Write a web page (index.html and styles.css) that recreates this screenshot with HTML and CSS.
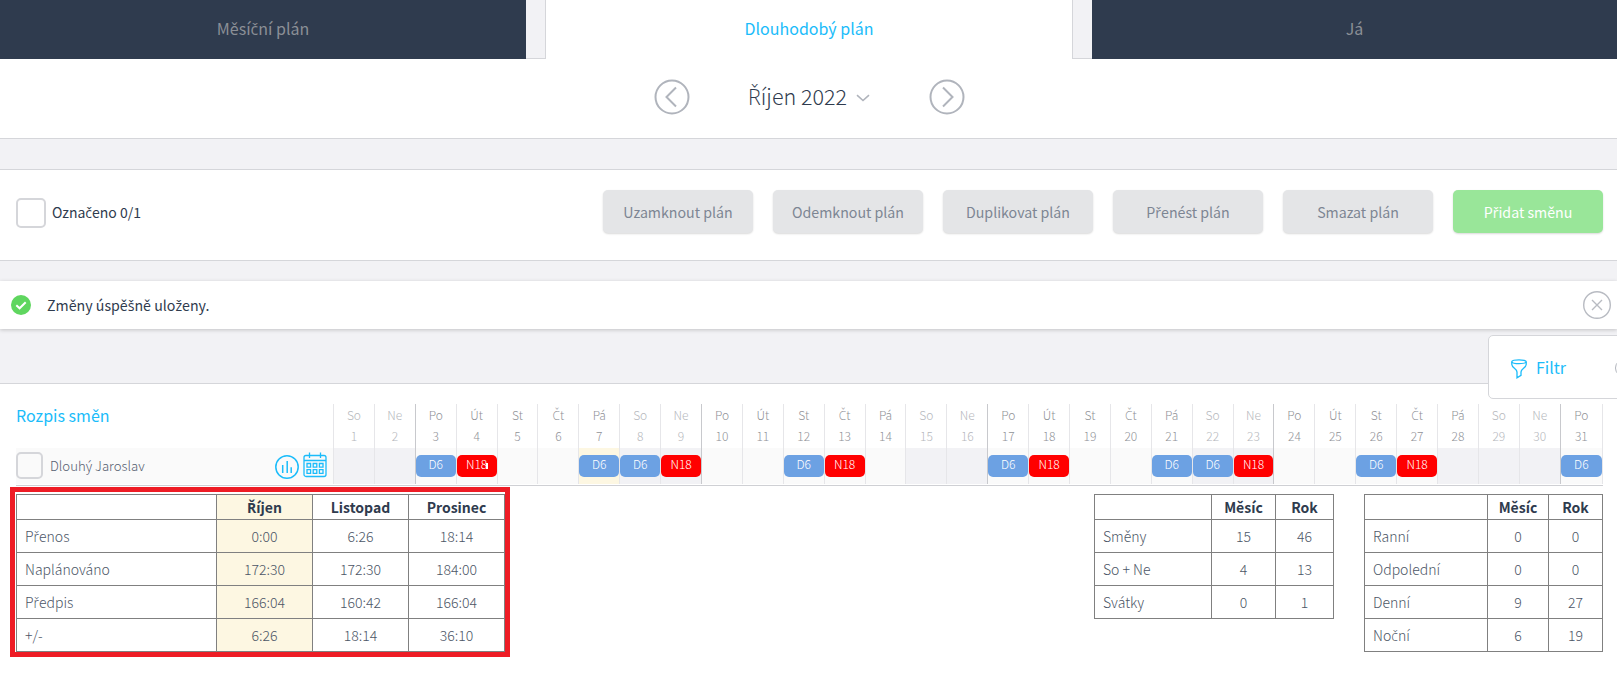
FILE: index.html
```
<!DOCTYPE html>
<html lang="cs">
<head>
  <meta charset="UTF-8">
  <title>Dlouhodobý plán</title>
  <link rel="stylesheet" href="styles.css">
</head>
<body>
  <div class="tabs">
    <a class="tab">Měsíční plán</a>
    <span class="tab-gap left"></span>
    <a class="tab active">Dlouhodobý plán</a>
    <span class="tab-gap right"></span>
    <a class="tab">Já</a>
  </div>

  <div class="month-bar">
    <svg class="arrow" viewBox="0 0 36 36"><circle cx="18" cy="18" r="16.5"/><path d="M22 8.500L12.500 18L22 27.500"/></svg>
    <div class="month"><span>Říjen 2022</span><svg class="chevron" viewBox="0 0 14 8"><path d="M1 1.200L7 6.500L13 1.200"/></svg></div>
    <svg class="arrow" viewBox="0 0 36 36"><circle cx="18" cy="18" r="16.5"/><path d="M14 8.500L23.500 18L14 27.500"/></svg>
  </div>

  <div class="actions">
    <span class="checkbox"></span>
    <span class="marked">Označeno 0/1</span>
    <div class="buttons">
      <button class="btn">Uzamknout plán</button>
      <button class="btn">Odemknout plán</button>
      <button class="btn">Duplikovat plán</button>
      <button class="btn">Přenést plán</button>
      <button class="btn">Smazat plán</button>
      <button class="btn green">Přidat směnu</button>
    </div>
  </div>

  <div class="message">
    <svg class="ok" viewBox="0 0 20 20"><circle cx="10" cy="10" r="10"/><path d="M5.300 10.200L8.600 13.300L14.700 7.200"/></svg>
    <span>Změny úspěšně uloženy.</span>
    <svg class="close" viewBox="0 0 30 30"><circle cx="15" cy="15" r="13.3"/><path d="M10 10L20 20M20 10L10 20"/></svg>
  </div>

  <div class="filter">
    <svg class="funnel" viewBox="0 0 16 20"><ellipse cx="8" cy="2.700" rx="7.200" ry="1.900"/><path d="M.8 2.700V5.500C1 9 6 9.500 6 13V18.800L10 16.300V13C10 9.500 15 9 15.200 5.500V2.700"/></svg>
    <span>Filtr</span>
    <i class="filter-toggle"></i>
  </div>

  <div class="plan">
    <div class="plan-head">
      <div class="plan-title">Rozpis směn</div>
      <div class="days" id="dayNames"></div>
    </div>
    <div class="plan-row">
      <div class="person">
        <span class="checkbox"></span>
        <span class="name">Dlouhý Jaroslav</span>
        <svg class="chart" viewBox="0 0 24 24"><circle cx="12" cy="12" r="11.200"/><path d="M7.700 18V10M12.200 18V6M16.200 18V12.300"/></svg>
        <svg class="calendar" viewBox="0 0 24 26">
          <rect x="1" y="3.500" width="22" height="21" rx="2"/>
          <path d="M1 8.500H23M6.500 .5V6M17.500 .5V6"/>
          <path d="M4 11.500h3.600v3.600H4zM10.200 11.500h3.600v3.600h-3.600zM16.400 11.500H20v3.600h-3.600zM4 17.700h3.600v3.600H4zM10.200 17.700h3.600v3.600h-3.600zM16.400 17.700H20v3.600h-3.600z"/>
        </svg>
      </div>
      <div class="days" id="shifts"></div>
    </div>

    <div class="stats">
      <div class="highlight">
        <table class="hours">
          <tr><th></th><th class="current">Říjen</th><th>Listopad</th><th>Prosinec</th></tr>
          <tr><td>Přenos</td><td class="current">0:00</td><td>6:26</td><td>18:14</td></tr>
          <tr><td>Naplánováno</td><td class="current">172:30</td><td>172:30</td><td>184:00</td></tr>
          <tr><td>Předpis</td><td class="current">166:04</td><td>160:42</td><td>166:04</td></tr>
          <tr><td>+/-</td><td class="current">6:26</td><td>18:14</td><td>36:10</td></tr>
        </table>
      </div>
      <table class="counts">
        <tr><th></th><th>Měsíc</th><th>Rok</th></tr>
        <tr><td>Směny</td><td>15</td><td>46</td></tr>
        <tr><td>So + Ne</td><td>4</td><td>13</td></tr>
        <tr><td>Svátky</td><td>0</td><td>1</td></tr>
      </table>
      <table class="types">
        <tr><th></th><th>Měsíc</th><th>Rok</th></tr>
        <tr><td>Ranní</td><td>0</td><td>0</td></tr>
        <tr><td>Odpolední</td><td>0</td><td>0</td></tr>
        <tr><td>Denní</td><td>9</td><td>27</td></tr>
        <tr><td>Noční</td><td>6</td><td>19</td></tr>
      </table>
    </div>
  </div>

  <script>
    const names = ['So','Ne','Po','Út','St','Čt','Pá'];
    const plan = { 3:'D6', 4:'N18', 7:'D6', 8:'D6', 9:'N18', 12:'D6', 13:'N18', 17:'D6', 18:'N18',
                   21:'D6', 22:'D6', 23:'N18', 26:'D6', 27:'N18', 31:'D6' };
    const today = 7, holidays = [28], noted = [4];
    let head = '', row = '';

    for (let d = 1; d <= 31; d++) {
      const wd = (d - 1) % 7;
      let cls = 'day';
      if (wd < 2) cls += ' weekend';
      if (wd === 2) cls += ' monday';
      head += `<div class="${cls}"><span>${names[wd]}</span><span>${d}</span></div>`;
      if (holidays.includes(d)) cls += ' holiday';
      if (d === today) cls += ' today';
      const s = plan[d];
      const note = noted.includes(d) ? ' noted' : '';
      row += `<div class="${cls}">` + (s ? `<b class="shift ${s[0] === 'D' ? 'daily' : 'night'}${note}">${s}</b>` : '') + '</div>';
    }
    document.getElementById('dayNames').innerHTML = head;
    document.getElementById('shifts').innerHTML = row;

    document.querySelectorAll('.tab, .month span, .marked, .btn, .message span, .plan-head span, th, td').forEach(el => {
      el.innerHTML = el.innerHTML.replace(/[čřšžČŘ]/g, c => `<span class="hacek">${c}</span>`);
    });
  </script>
</body>
</html>
```
FILE: styles.css
```
* { box-sizing:border-box; margin:0; padding:0; }
body { font-family:'Noto Sans CJK SC','Noto Sans',sans-serif; font-size:14px; line-height:20px; color:#2f3b4e;
  background:#f2f2f5; height:673px; overflow:hidden; position:relative; }
svg { fill:none; display:block; flex:none; }
.hacek { font-family:'Open Sans','Noto Sans',sans-serif; line-height:0; }

.tabs { display:grid; grid-template-columns:526px 20px 526px 20px 1fr; height:59px; }
.tab { background:#2f3b4e; color:#8b8f96; font-size:16px; line-height:56px; text-align:center; }
.tab.active { background:#fff; color:#1bbcfa; }
.tab-gap { border-bottom:1px solid #d5d6da; }
.tab-gap.left { border-right:1px solid #d5d6da; }
.tab-gap.right { border-left:1px solid #d5d6da; }

.month-bar { height:80px; background:#fff; border-bottom:1px solid #d5d6da; display:flex; justify-content:center; align-items:center; padding:0 0 3px 1px; }
.arrow { width:36px; height:36px; stroke:#b0b4bc; stroke-width:2; }
.month { width:239px; display:flex; justify-content:center; align-items:center; gap:9px; font-size:21.5px; font-weight:300; line-height:30px; padding-bottom:2px; }
.chevron { width:14px; height:8px; stroke:#b0b4bc; stroke-width:1.6; margin-top:4px; }

.actions { margin-top:30px; height:92px; background:#fff; border-top:1px solid #d5d6da; border-bottom:1px solid #d5d6da;
  display:flex; align-items:center; padding:0 14px 8px 16px; }
.checkbox { width:30px; height:30px; border:2px solid #d5d6da; border-radius:5px; flex:none; margin-top:3px; }
.marked { margin-left:6px; margin-top:1px; }
.buttons { margin-left:auto; display:flex; gap:20px; }
.btn { width:150px; height:43px; border:none; border-radius:5px; background:#e4e5e7; color:#7d8593; font:inherit; font-size:14.2px; padding-top:1px;
  box-shadow:0 1px 2px rgba(0,0,0,0.15); }
.btn.green { background:#99e699; color:#fff; }

.message { margin-top:20px; height:48px; background:#fff; display:flex; align-items:center; padding:0 5px 0 11px; font-size:14.2px; box-shadow:0 1px 4px rgba(0,0,0,0.2); }
.ok { width:20px; height:20px; margin-right:16px; }
.ok circle { fill:#5fd65f; }
.ok path { stroke:#fff; stroke-width:2; }
.close { width:30px; height:30px; margin-left:auto; stroke:#b8bbc2; stroke-width:1.4; }

/* panel vysunutý zprava přes okraj stránky */
.filter { position:absolute; top:335px; left:1488px; width:180px; height:64px; background:#fff; border:1px solid #d5d6da; border-radius:5px;
  display:flex; align-items:center; padding-left:22px; font-size:16px; color:#1bbcfa; }
.funnel { width:16px; height:20px; stroke:#1bbcfa; stroke-width:1.3; margin:3px 9px 0 0; }
.filter-toggle { width:18px; height:18px; border:1px solid #b0b4bc; border-radius:50%; position:absolute; left:126px; top:23px; }

.plan { margin-top:54px; background:#fff; border-top:1px solid #d5d6da; height:290px; padding:20px 14px 0 16px; }
.plan-head, .plan-row { display:flex; }
.plan-head { height:44px; }
.plan-title { width:317px; font-size:16px; line-height:23px; color:#1bbcfa; }
.plan-row { height:38px; border-bottom:1px solid #cfd0d4; background:linear-gradient(#fafafa 36px,#fff 36px); }
.person { width:317px; height:36px; display:flex; align-items:center; padding-right:6px; }
.person .checkbox { width:27px; height:27px; margin-top:-1px; }
.name { font-size:13.2px; font-weight:300; margin-left:7px; color:#566070; }
.chart { width:24px; height:24px; margin-left:auto; margin-right:4px; margin-top:2px; stroke:#1bbcfa; stroke-width:1.5; }
.calendar { width:24px; height:26px; margin-top:-2px; stroke:#1bbcfa; stroke-width:1.3; }

.days { flex:1; display:grid; grid-template-columns:repeat(30,40.9px) 1fr; border-right:1px solid #e6e6e9; }
.day { border-left:1px solid #e6e6e9; min-width:0; }
.day.monday { border-left-color:#c8c9cd; }
.plan-head .day { display:flex; flex-direction:column; align-items:center; font-size:12px; font-weight:300; line-height:21px; color:#909297; }
.plan-head .day.weekend { color:#b5b7bc; }
.plan-row .days { height:36px; }
.plan-row .weekend, .plan-row .holiday { background:#f2f2f5; }
.plan-row .today { background:#fdf7e2; }
.shift { display:block; height:22px; margin-top:7px; border-radius:5px; color:#fff; font-size:12px; font-weight:300; line-height:18px; text-align:center; }
.daily { background:#6ca1e3; }
.night { background:#f00; }
.noted { position:relative; }
.noted::after { content:''; position:absolute; left:29px; top:8px; width:2px; height:6px; background:#fff; }

.stats { display:flex; align-items:flex-start; margin-top:1px; }
.highlight { border:5px solid #ee1c25; margin-left:-6px; padding:2px 0 0 1px; width:500px; height:170px; }
table { border-collapse:collapse; table-layout:fixed; }
th, td { border:1px solid #808080; text-align:center; height:33px; line-height:20px; }
th { height:25px; font-weight:700; }
td { font-weight:300; color:#4c5666; }
td:first-child { text-align:left; padding-left:8px; }
.current { background:#fdf7e2; }
.hours { width:489px; }
.hours th { width:96px; }
.hours th:first-child { width:200px; }
.counts { width:240px; margin:7px 0 0 584px; }
.counts th { width:64px; }
.counts th:first-child { width:117px; }
.counts th:last-child { width:58px; }
.types { width:239px; margin:7px 0 0 30px; }
.types th { width:61px; }
.types th:first-child { width:123px; }
.types th:last-child { width:54px; }
```
